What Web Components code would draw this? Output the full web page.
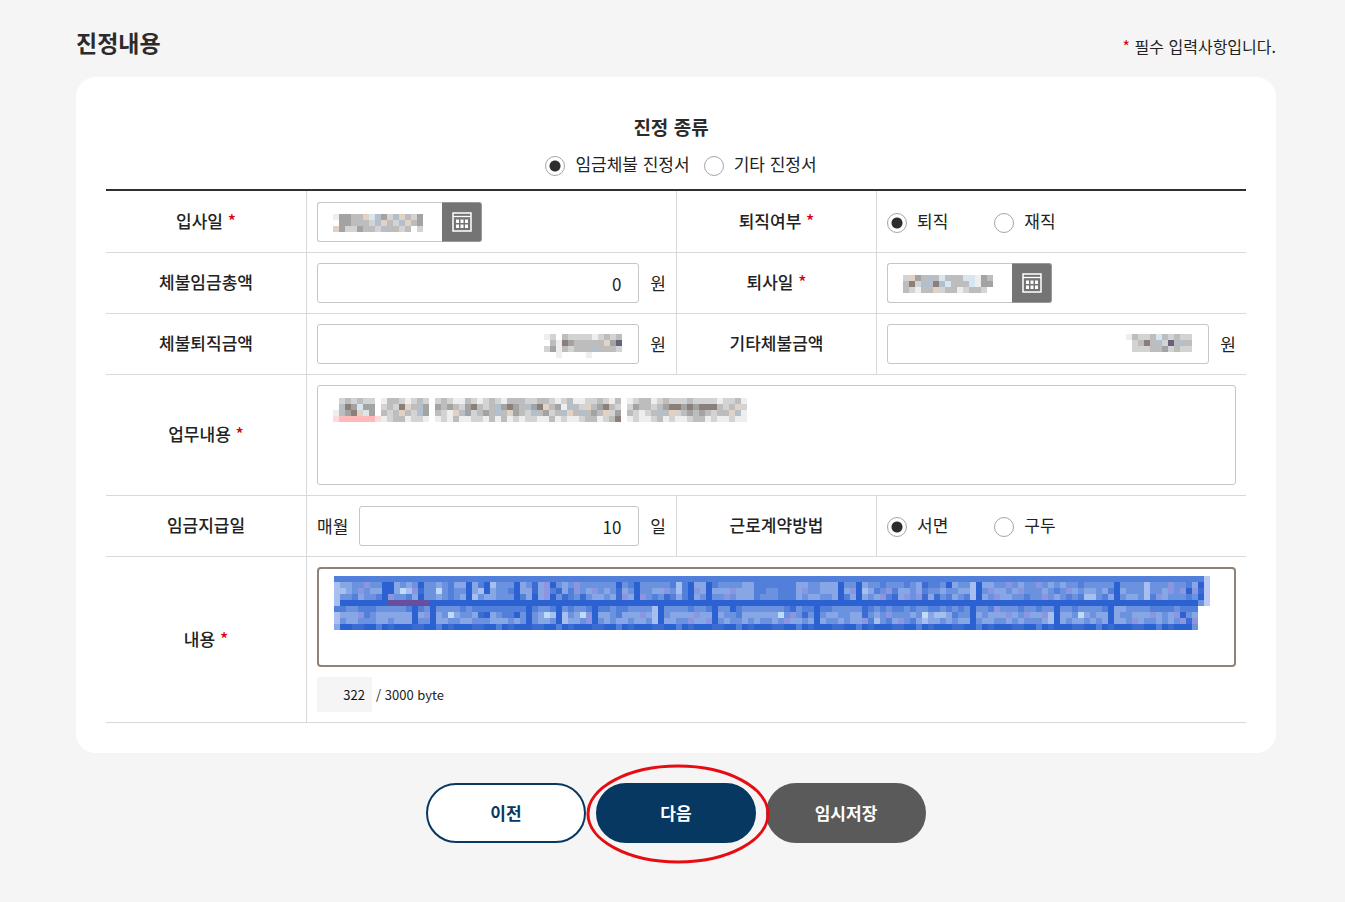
<!DOCTYPE html>
<html lang="ko">
<head>
<meta charset="utf-8">
<meta name="viewport" content="width=device-width, initial-scale=1">
<title>진정내용</title>
<style>
body{margin:0;background:#f5f5f5;color:#222;font-family:"Noto Sans CJK KR","Noto Sans",sans-serif;font-size:17px;line-height:24px}
</style>
</head>
<body>
<complaint-page></complaint-page>
<script>
const define = (name, html, setup) => {
  const template = document.createElement('template');
  template.innerHTML = html;
  customElements.define(name, class extends HTMLElement {
    constructor() {
      super();
      this.attachShadow({mode: 'open'}).append(template.content.cloneNode(true));
    }
    connectedCallback() {
      if (setup && !this.ready) { this.ready = true; setup(this, this.shadowRoot); }
    }
  });
};

/* Masked values: one character per 6px cell, '.' is an empty cell */
const COLORS = {
  D:'#2b61d0', d:'#3c6bd4', m:'#527fd9', b:'#6b92df', l:'#86a6e6', p:'#8c96e0', w:'#a6bff0', W:'#bcdcfa', x:'#bccbf3', V:'#674f9f',
  o:'#eeeeee', a:'#d3d3d3', c:'#bdbdbd', e:'#a3a3a3', f:'#8b7f7a', t:'#e2d2c4', u:'#b3bfcb', i:'#d7e7f2', F:'#65627a', r:'#ffb9b9', s:'#fbdcdc'
};
const MASKS = {
  joinDate: ['oeecctiueautcae', '.eecccautcautce', 'teaaeccauccac.a'],
  leaveDate: ['atecuciccciioec', 'cfauufuicccioee', 'caocctaccoacca.'],
  severance: ['oa.caaaaoacac', '.cofecccccteF', 'aeocacccuccca', '..o....o.....'],
  other: ['ocaacicacaa', '.acfcuaFcuc', '.aaacceacaa'],
  duty: [
    '.acacaa.occaoaca.acaoocaoacaocccaaccaoacooaacaoc.oaccoacaaacaaaaoaaco',
    '.ufeiee.acaftcue.ececaefcacuefecueftceoucatcefca.aeccaceffefefffcacta',
    'oceftie.cactcaue.caotueacecuctecauceacutcucectae.caoacuctacececacctuo',
    'srrrrrrsoaccoaao.oaocooaaococoaoaaoocoaooaccoacf.oaooacoaooaccoaooaoo'
  ],
  detail: [
    'm'.repeat(145) + 'x',
    'wllbbpbbDDlblbDbblbmllDlmDwbbbDlbdlpDblbpbbbbbbDbm' + 'DbbbbbmwmDllDmbbbbllmmmmmmmllbblllDbbDlbbmbbbmbldm' + 'mbDlbbwDllbbpblbbpblblbbmbbbbbDbbbbwbbbpbbmlDx',
    'wwlbpbllDDlWwpdbbWbmbbDlwDlbbmDlldlpmdlmpblpblbdlb' + 'DbbllpbwmDplDlllplllmmbbmmmlpbblllDlpDwlmbpmllblmb' + 'blbbllwDbpllblpbbbblbmbplbllblmDlbbbwbblpbpDpdx'.replace('bbbb', 'bbb'),
    'wbbmlbbmDpbbmlDbblbmblDwbllbbbDmlDlpDbdmbdbllbldpl' + 'DpbmbdmlmDlbDbbpblllmbbbmmmlbllbblDmlDlblpmdlpbpdl' + 'dbmlbmwDlbpllbbmbbpblbmbmwwbmlDbllbwmplbbbmbDx',
    'w' + 'D'.repeat(8) + 'V'.repeat(7) + 'D'.repeat(128) + 'bx',
    'mmbbmmmbbbbbmDmbDbbbbmbmmmmmmmmmDmbbmDbmbbmDmmbmmb' + 'bbbwDbbbbmbbmDbbDmbbbbbbbmdbmmDmmbbbbbdmbmbmmbmbbm' + 'mbmbmbDbbmpbbbmbbmbbDbbmbbbbmDllbbbbmmmmbmmm..',
    'wlllpmbllllllDlpDlbWlbbldDlbmmDbDblWwDwblWpDllbmll' + 'lplwDbllllpllDlbbmllllllWbpbdbDbllbblldblbpbbbblbWl'.replace('bbbb', 'bbb') + 'wwlmbbDlblllplbpllpwDllbWlbllDlbblllplblpDbl..',
    'wbllbbbllblllDbbDllbbllbbblllblbDbllbDwllbpDblbllb' + 'llbwDllbbpllpDblbblblbblbpllblDlbblbllpmwbmlpbmlwl' + 'lblbllDbllbblblbbblwDlbllblblDllbplbblblbpdp..',
    'l' + 'DDddDDmDdD'.repeat(14) + 'DDb'
  ]
};

define('masked-value', `
<style>:host{display:block;pointer-events:none}svg{display:block}</style>
<svg aria-hidden="true" shape-rendering="crispEdges"></svg>`, (host, root) => {
  const rows = MASKS[host.getAttribute('value')];
  const cols = Math.max(...rows.map(r => r.length));
  const svg = root.querySelector('svg');
  svg.setAttribute('width', cols * 6);
  svg.setAttribute('height', rows.length * 6);
  svg.innerHTML = rows.map((row, y) => [...row].map((k, x) =>
    COLORS[k] ? `<rect x="${x * 6}" y="${y * 6}" width="6" height="6" fill="${COLORS[k]}"/>` : '').join('')).join('');
});

define('required-mark', `
<style>:host{display:inline;color:#d8000f}</style>*`);

/* A text control given by the user, with an optional mask lying over it */
define('field-box', `
<style>
:host{display:block;position:relative;flex:1;min-width:0}
::slotted(input),::slotted(textarea){box-sizing:border-box;display:block;width:100%;height:40px;margin:0;padding:0 17px;border:1px solid #c6c6c6;border-radius:3px;background:#fff;color:#222;font:inherit;outline:0}
::slotted(input){text-align:right}
::slotted(textarea){height:100px;padding:10px 16px;resize:none}
:host([active]) ::slotted(textarea){border:2px solid #8f8378;border-radius:4px}
::slotted(masked-value){position:absolute;top:13px;left:16px}
:host([end]) ::slotted(masked-value){left:auto;top:10px;right:17px}
:host([active]) ::slotted(masked-value){top:9px;left:17px}
</style><slot></slot>`);

define('date-field', `
<style>
:host{display:flex;width:165px;position:relative}
::slotted(input){box-sizing:border-box;width:125px;height:40px;margin:0;padding:0 15px;border:1px solid #c6c6c6;border-right:0;border-radius:3px 0 0 3px;background:#fff;font:inherit;outline:0}
::slotted(masked-value){position:absolute;top:12px;left:16px}
button{width:40px;height:40px;padding:0;border:1px solid #999;border-left:0;border-radius:0 3px 3px 0;background:#747474;display:grid;place-items:center}
svg{display:block}
</style>
<slot></slot>
<button type="button" aria-label="달력 열기"><svg width="20" height="20" viewBox="0 0 20 20" fill="none" stroke="#fff"><path d="M1 1h18v18H1z" stroke-width="1.5"/><path d="M1 4.5h18" stroke-width="1.3"/><path d="M4 7.500h3v3.500H4zM8.500 7.500h3v3.500h-3zM13 7.500h3v3.500h-3zM4 12.500h3v3.500H4zM8.500 12.500h3v3.500h-3zM13 12.500h3v3.500h-3z" fill="#fff" stroke="none"/></svg></button>`);

define('unit-row', `
<style>:host{display:flex;align-items:center;gap:11px}</style><slot></slot>`);

define('radio-set', `
<style>
:host{display:flex;gap:46px}
:host([compact]){gap:14px}
label{display:flex;align-items:center;gap:10px;padding-bottom:2px}
input{appearance:none;box-sizing:border-box;width:20px;height:20px;margin:4px 0 0;border:1px solid #a5a5a5;border-radius:50%;background:#fff}
input:checked{background:radial-gradient(circle,#2d2d2d 5px,#fff 6px)}
</style>`, (host, root) => {
  host.setAttribute('role', 'radiogroup');
  host.getAttribute('options').split('|').forEach((text, i) => {
    const label = document.createElement('label');
    const input = document.createElement('input');
    input.type = 'radio';
    input.name = 'choice';
    input.defaultChecked = i === 0;
    label.append(input, text);
    root.append(label);
  });
});

define('page-heading', `
<style>
:host{display:flex;justify-content:space-between;align-items:flex-end;padding:24px 0 17px}
h2{margin:0;font-size:23px;line-height:36px;padding-bottom:0;font-weight:700;color:#2b2b2b;align-self:flex-start}
p{margin:0;font-size:16px;line-height:28px}
</style><h2><slot></slot></h2><p><required-mark></required-mark> 필수 입력사항입니다.</p>`);

define('form-card', `
<style>:host{display:block;background:#fff;border-radius:20px;padding:30px}</style><slot></slot>`);

define('pill-button', `
<style>
:host{display:block;position:relative}
button{display:block;width:160px;height:60px;padding:0;border:2px solid #063861;border-radius:30px;background:#fff;color:#063861;font:inherit;font-size:17px;font-weight:700}
:host([tone=primary]) button{background:#063861;color:#fff}
:host([tone=gray]) button{background:#5a5a5a;border-color:#5a5a5a;color:#fff}
::slotted(svg){position:absolute;left:-10px;top:-19px;z-index:1;pointer-events:none}
</style><button type="button"><slot></slot></button><slot name="mark"></slot>`);

define('complaint-form', `
<style>
:host{display:block}
h3{margin:0;padding-right:10px;text-align:center;font-size:19px;line-height:40px;font-weight:700;color:#2b2b2b}
.kind{justify-content:center;height:36px;padding-left:10px;margin-bottom:6px}
table{width:100%;table-layout:fixed;border-collapse:separate;border-spacing:0;border-top:2px solid #303030}
.name{width:200px}
th,td{box-sizing:border-box;border-bottom:1px solid #d9d9d9;padding:10px;height:61px}
tr:first-child td{height:62px}
th{font-weight:500;text-align:center;padding:0 10px 2px}
td{border-left:1px solid #d9d9d9}
td+th{border-left:1px solid #d9d9d9}
.count{display:flex;align-items:center;gap:4px;margin-top:10px;font-size:13px;line-height:35px}
output{box-sizing:border-box;width:55px;height:35px;padding-right:7px;background:#f5f5f5;text-align:right;color:#111}
</style>
<h3>진정 종류</h3>
<radio-set class="kind" compact aria-label="진정 종류" options="임금체불 진정서|기타 진정서"></radio-set>
<table>
<colgroup><col class="name"><col><col class="name"><col></colgroup>
<tbody>
<tr>
<th scope="row"><label for="join">입사일 <required-mark></required-mark></label></th>
<td><date-field><input id="join" type="text"><masked-value value="joinDate"></masked-value></date-field></td>
<th scope="row">퇴직여부 <required-mark></required-mark></th>
<td><radio-set aria-label="퇴직여부" options="퇴직|재직"></radio-set></td>
</tr>
<tr>
<th scope="row"><label for="wage">체불임금총액</label></th>
<td><unit-row><field-box><input id="wage" type="text" value="0"></field-box><span>원</span></unit-row></td>
<th scope="row"><label for="leave">퇴사일 <required-mark></required-mark></label></th>
<td><date-field><input id="leave" type="text"><masked-value value="leaveDate"></masked-value></date-field></td>
</tr>
<tr>
<th scope="row"><label for="severance">체불퇴직금액</label></th>
<td><unit-row><field-box end><input id="severance" type="text"><masked-value value="severance"></masked-value></field-box><span>원</span></unit-row></td>
<th scope="row"><label for="other">기타체불금액</label></th>
<td><unit-row><field-box end><input id="other" type="text"><masked-value value="other"></masked-value></field-box><span>원</span></unit-row></td>
</tr>
<tr>
<th scope="row"><label for="duty">업무내용 <required-mark></required-mark></label></th>
<td colspan="3"><field-box><textarea id="duty"></textarea><masked-value value="duty"></masked-value></field-box></td>
</tr>
<tr>
<th scope="row"><label for="payday">임금지급일</label></th>
<td><unit-row><span>매월</span><field-box><input id="payday" type="text" value="10"></field-box><span>일</span></unit-row></td>
<th scope="row">근로계약방법</th>
<td><radio-set aria-label="근로계약방법" options="서면|구두"></radio-set></td>
</tr>
<tr>
<th scope="row"><label for="detail">내용 <required-mark></required-mark></label></th>
<td colspan="3"><field-box active><textarea id="detail"></textarea><masked-value value="detail"></masked-value></field-box>
<div class="count"><output for="detail">322</output><span>/ 3000 byte</span></div></td>
</tr>
</tbody>
</table>`);

define('complaint-page', `
<style>
:host{display:block;padding:0 69px 59px 76px}
nav{display:flex;justify-content:center;gap:10px;margin-top:30px}
</style>
<main>
<page-heading>진정내용</page-heading>
<form-card><complaint-form></complaint-form></form-card>
<nav aria-label="작성 단계">
<pill-button>이전</pill-button>
<pill-button tone="primary">다음<svg slot="mark" width="184" height="100" viewBox="0 0 184 100" aria-hidden="true"><ellipse cx="92" cy="50" rx="90" ry="48" fill="none" stroke="#e60c12" stroke-width="3"/></svg></pill-button>
<pill-button tone="gray">임시저장</pill-button>
</nav>
</main>`);
</script>
</body>
</html>
